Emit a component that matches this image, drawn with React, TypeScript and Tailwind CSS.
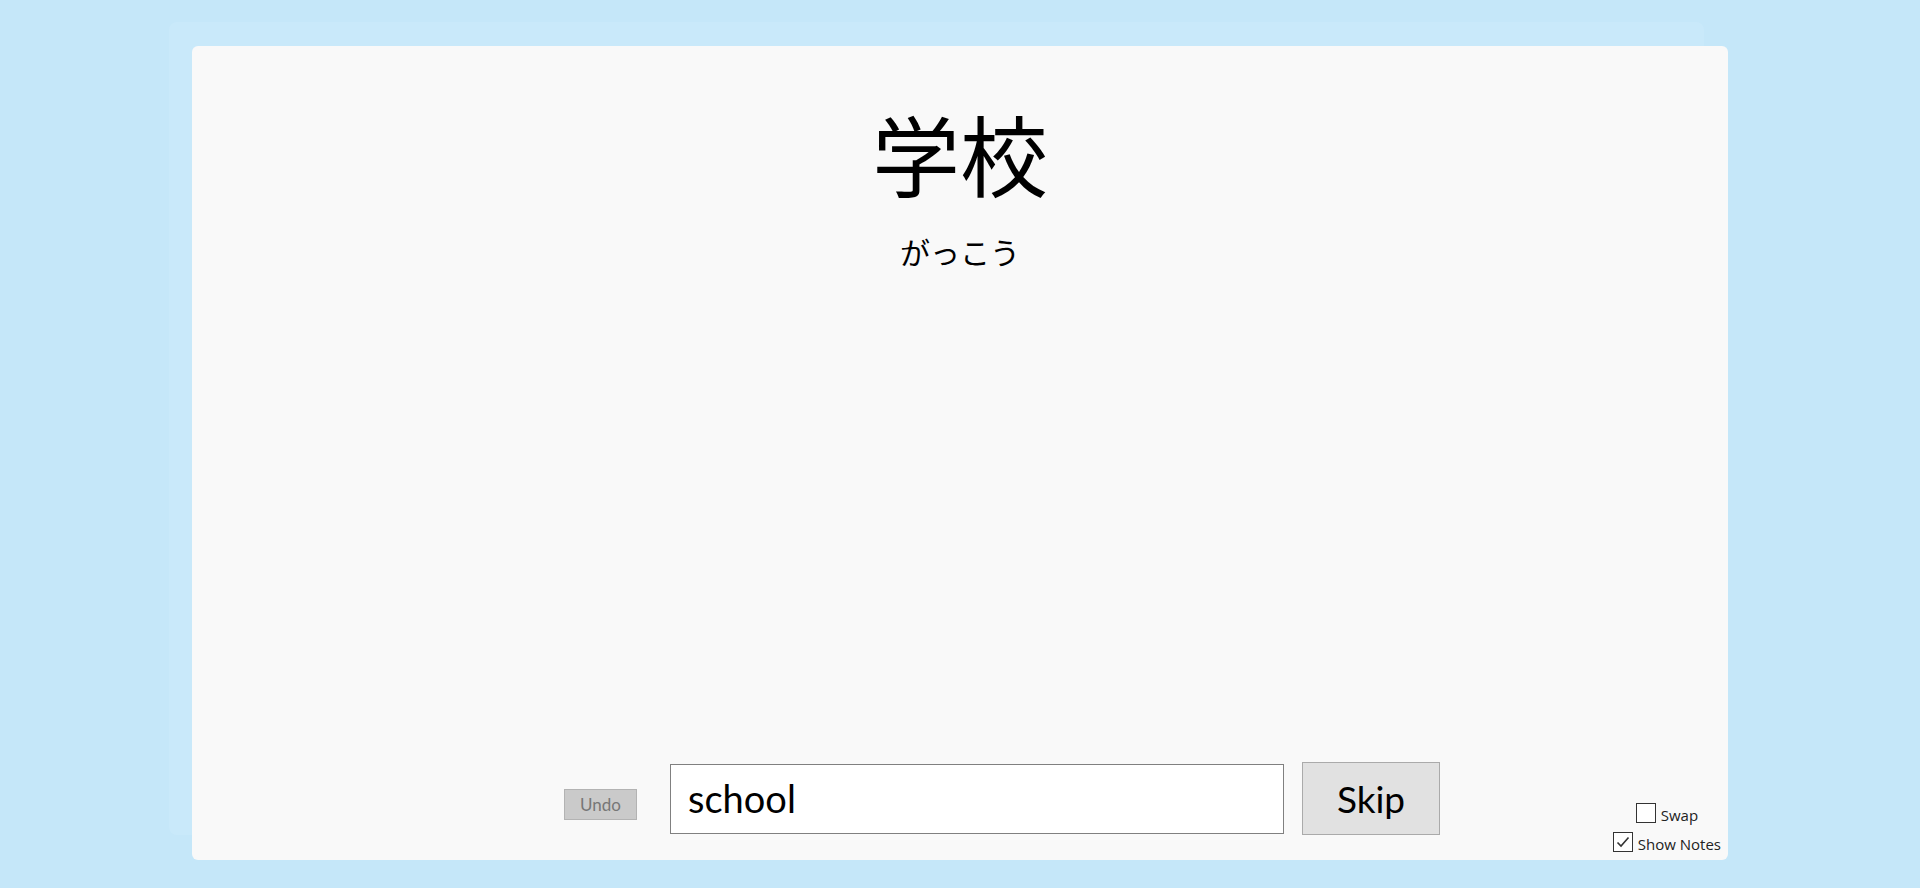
import React from "react";

export default function App() {
  return (
    <div className="w-[1920px] h-[888px] bg-[#c5e7f9] relative overflow-hidden" style={{ fontFamily: "Lato, 'Noto Sans', sans-serif" }}>
      <div className="absolute left-[169px] top-[22px] w-[1535px] h-[813px] rounded-[8px] bg-[#c9e9fa]" />
      <div className="absolute left-[192px] top-[46px] w-[1536px] h-[814px] rounded-[6px] bg-[#f9f9f9] flex flex-col">
        <div className="flex flex-col items-center pt-[62px]">
          <div className="text-[88px] leading-none text-black" style={{ fontFamily: "'Noto Sans CJK JP', sans-serif" }}>学校</div>
          <div className="text-[30px] leading-none text-black mt-[40px]" style={{ fontFamily: "'Noto Sans CJK JP', sans-serif" }}>がっこう</div>
        </div>
        <div className="flex-1" />
        <div className="flex items-end pb-[8px]">
          <div className="flex items-center ml-[372px] mb-[17px]">
            <button className="w-[73px] h-[31px] bg-[#cacaca] border border-[#b3b3b3] text-[#777] text-[17px] leading-none mt-[11px]">Undo</button>
            <div className="ml-[33px] w-[614px] h-[70px] bg-white border border-[#808080] flex items-center pl-[17px] text-[38px] text-black">school</div>
            <button className="ml-[18px] w-[138px] h-[73px] bg-[#e1e1e1] border border-[#aaa] text-[37px] text-black">Skip</button>
          </div>
          <div className="ml-auto flex flex-col items-center pr-[7px] gap-[9px] text-[15px] text-[#222]" style={{ fontFamily: "'Open Sans', sans-serif" }}>
            <label className="flex items-end gap-[5px]">
              <span className="w-[20px] h-[20px] bg-white border border-[#333] block" />
              <span className="leading-none">Swap</span>
            </label>
            <label className="flex items-end gap-[5px]">
              <span className="w-[20px] h-[20px] bg-white border border-[#333] flex items-center justify-center">
                <svg width="16" height="16" viewBox="0 0 16 16"><path d="M2.5 8.5 L6 12 L13.5 3.5" fill="none" stroke="#333" strokeWidth="1.6" /></svg>
              </span>
              <span className="leading-none">Show Notes</span>
            </label>
          </div>
        </div>
      </div>
    </div>
  );
}
